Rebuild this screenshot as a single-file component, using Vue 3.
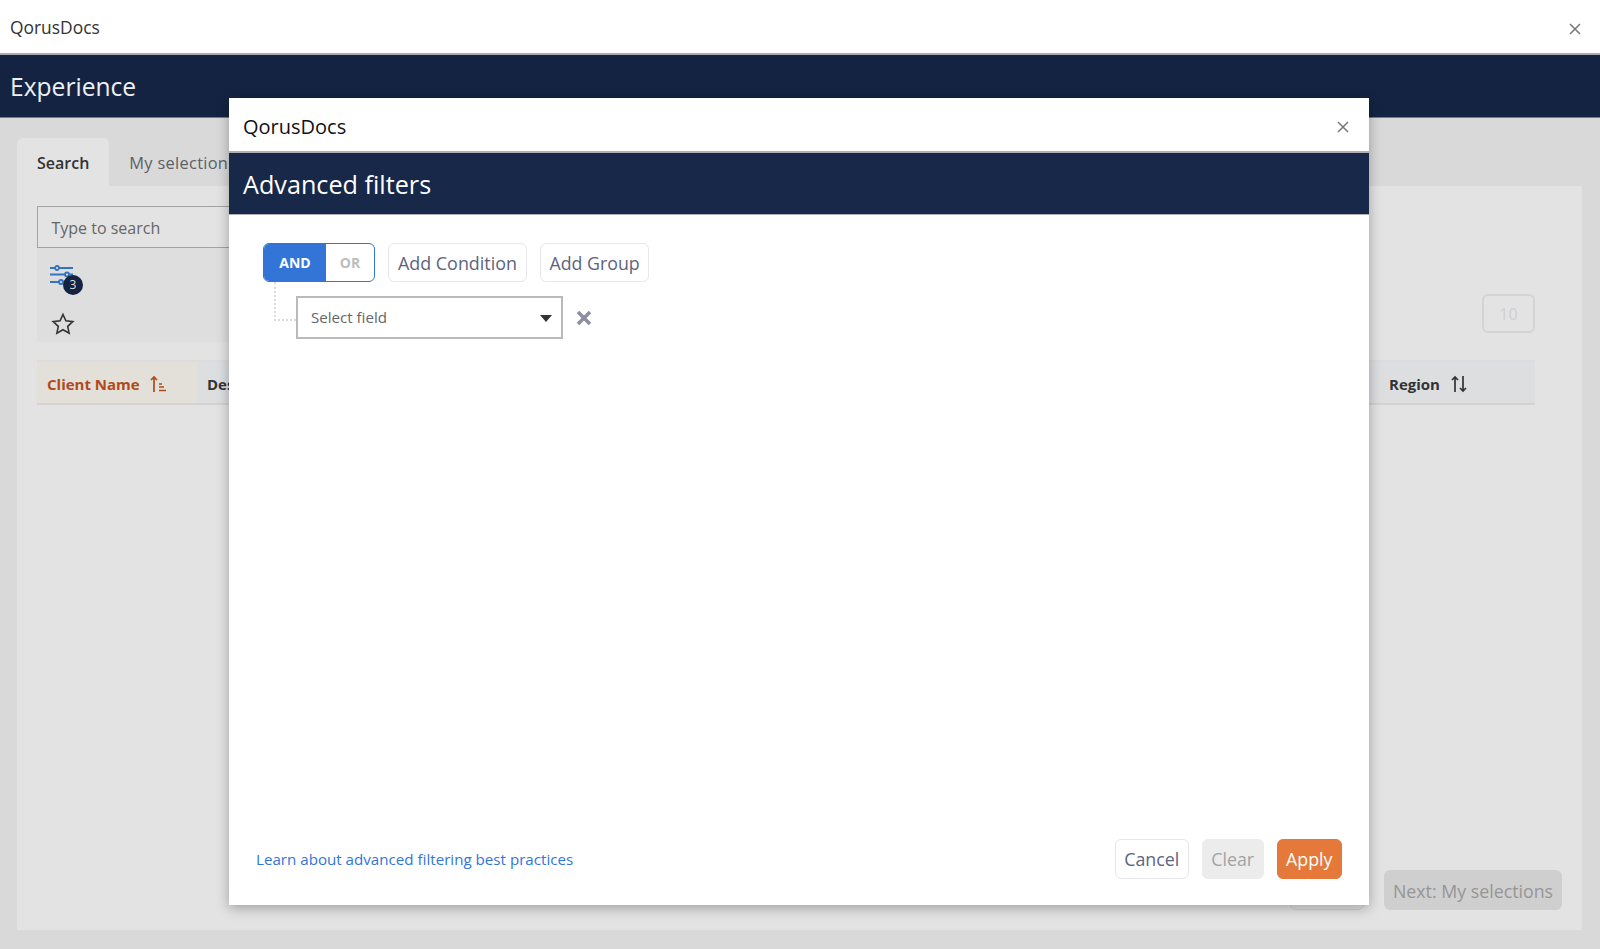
<script setup>
const columns = [
  { name: 'Client Name', sorted: true },
  { name: 'Description', sorted: false },
]
</script>

<template>
  <div class="page">
    <header class="titlebar">
      <span class="brand">QorusDocs</span>
      <svg class="close outer" viewBox="0 0 12 12"><path d="M1 1l10 10M11 1L1 11" /></svg>
    </header>
    <div class="hero">Experience</div>
    <main class="content">
      <nav class="tabs">
        <div class="tab active">Search</div>
        <div class="tab">My selections</div>
      </nav>
      <section class="panel">
        <div class="search">Type to search</div>
        <div class="toolbar">
          <div class="filter-icon">
            <svg viewBox="0 0 24 24" width="24" height="24">
              <path d="M0 5h23M0 11.500h23M0 19h12" />
              <circle cx="7" cy="5" r="2" />
              <circle cx="17" cy="11.500" r="2" />
              <circle cx="11" cy="19" r="2" />
            </svg>
            <span class="badge">3</span>
          </div>
          <svg class="star" viewBox="0 0 24 24" width="24" height="24">
            <path d="M12 2.500l2.900 6.300 6.900.8-5.100 4.700 1.400 6.800-6.100-3.400-6.100 3.400 1.400-6.800-5.100-4.700 6.900-.8z" />
          </svg>
        </div>
        <div class="page-size">10</div>
        <div class="thead">
          <div v-for="c in columns" :key="c.name" class="th" :class="{ sorted: c.sorted }">
            <span>{{ c.name }}</span>
            <svg v-if="c.sorted" viewBox="0 0 18 18" width="18" height="18">
              <path d="M5 17V2M2 5l3-3 3 3M10 9h3M10 12h5M10 15.500h7" />
            </svg>
          </div>
          <div class="th region">
            <span>Region</span>
            <svg viewBox="0 0 18 18" width="18" height="18">
              <path d="M5 17V2M2 5l3-3 3 3M13 1v15M10 13l3 3 3-3" />
            </svg>
          </div>
        </div>
        <div class="pager">
          <div class="ghost"></div>
          <div class="next">Next: My selections</div>
        </div>
      </section>
    </main>

    <div class="dialog">
      <div class="dlg-title">
        <span>QorusDocs</span>
        <svg class="close" viewBox="0 0 12 12"><path d="M1 1l10 10M11 1L1 11" /></svg>
      </div>
      <div class="dlg-head">Advanced filters</div>
      <div class="dlg-body">
        <div class="builder-top">
          <div class="toggle">
            <span class="and">AND</span>
            <span class="or">OR</span>
          </div>
          <button class="btn">Add Condition</button>
          <button class="btn group">Add Group</button>
        </div>
        <div class="rule">
          <div class="connector"></div>
          <div class="select">
            <span>Select field</span>
            <i class="caret"></i>
          </div>
          <svg class="remove" viewBox="0 0 16 16" width="16" height="16"><path d="M2 2l12 12M14 2L2 14" /></svg>
        </div>
      </div>
      <div class="dlg-foot">
        <a class="learn">Learn about advanced filtering best practices</a>
        <div class="actions">
          <button class="btn">Cancel</button>
          <button class="btn clear">Clear</button>
          <button class="btn apply">Apply</button>
        </div>
      </div>
    </div>
  </div>
</template>

<style>
html, body { margin: 0; background: #d9d9d9; }
</style>

<style scoped>
.page {
  position: relative;
  height: 949px;
  width: 1600px;
  overflow: hidden;
  display: flex;
  flex-direction: column;
  font-family: "Open Sans", "Noto Sans", sans-serif;
  background: #d9d9d9;
}
.titlebar {
  height: 53px;
  flex: none;
  background: #fff;
  border-bottom: 2px solid #a9abb0;
  display: flex;
  align-items: center;
  justify-content: space-between;
  padding: 0 19px 0 10px;
  color: #333;
  font-size: 17.400px;
}
.close { width: 12px; height: 12px; fill: none; stroke: #777; stroke-width: 1.500; }
.close.outer { margin-top: 4px; }
.hero {
  height: 62px;
  flex: none;
  background: #142341;
  color: #eef0f3;
  font-size: 24.600px;
  line-height: 64px;
  padding-left: 10px;
  border-bottom: 1px solid #777c86;
}
.content { flex: 1; padding: 20px 18px 19px 17px; display: flex; flex-direction: column; min-height: 0; }
.tabs { display: flex; height: 48px; flex: none; }
.tab {
  padding: 0 20px;
  line-height: 50px;
  font-size: 16.400px;
  letter-spacing: .3px;
  color: #5c5f66;
  font-weight: 500;
}
.tab.active { background: #e3e3e3; color: #333; border-radius: 6px 6px 0 0; font-weight: 600; font-size: 16px; letter-spacing: 0; }
.panel {
  flex: 1;
  background: #e3e3e3;
  padding: 20px 47px 0 20px;
  display: flex;
  flex-direction: column;
  position: relative;
}
.search {
  height: 42px;
  width: 400px;
  border: 1px solid #a3a3a3;
  box-sizing: border-box;
  padding-left: 13.500px;
  line-height: 42px;
  font-size: 16px;
  color: #666;
}
.toolbar {
  height: 94px;
  width: 900px;
  background: #dedede;
  position: relative;
  flex: none;
}
.filter-icon { position: absolute; left: 13px; top: 15px; width: 24px; height: 24px; }
.filter-icon svg { fill: none; stroke: #3373c4; stroke-width: 1.800; display: block; }
.filter-icon circle { fill: #dedede; }
.badge {
  position: absolute;
  left: 13px;
  top: 12px;
  width: 20px;
  height: 20px;
  border-radius: 50%;
  background: #142341;
  color: #ddd;
  font-size: 12px;
  line-height: 20px;
  text-align: center;
}
.star { position: absolute; left: 14px; top: 64px; fill: none; stroke: #333; stroke-width: 1.600; }
.page-size {
  position: absolute;
  right: 47px;
  top: 108px;
  width: 53px;
  height: 39px;
  box-sizing: border-box;
  border: 2px solid #d4d4d4;
  border-radius: 6px;
  color: #cfcfcf;
  font-size: 16px;
  line-height: 36px;
  text-align: center;
}
.thead {
  margin-top: 18px;
  height: 45px;
  flex: none;
  background: #dddee0;
  border-bottom: 2px solid #d3d3d3;
  border-top: 2px solid #dcdcdc;
  box-sizing: border-box;
  display: flex;
  position: relative;
}
.th {
  display: flex;
  align-items: center;
  gap: 9px;
  padding: 2px 10px 0;
  font-size: 15px;
  font-weight: 700;
  color: #333;
}
.th svg { fill: none; stroke: currentColor; stroke-width: 1.700; }
.th.sorted { background: #e3dfd9; color: #b04a19; width: 160px; box-sizing: border-box; }
.th.region { position: absolute; left: 1342px; top: 0; bottom: 0; gap: 10px; }
.pager {
  margin-top: auto;
  margin-bottom: 20px;
  margin-right: -27px;
  display: flex;
  justify-content: flex-end;
  align-items: flex-end;
  gap: 20px;
}
.ghost { width: 74px; height: 40px; border: 1px solid #cfcfcf; border-radius: 6px; box-sizing: border-box; }
.next {
  width: 178px;
  height: 40px;
  background: #cfcfcf;
  border-radius: 6px;
  color: #969696;
  font-size: 17.800px;
  line-height: 42px;
  text-align: center;
}

.dialog {
  position: absolute;
  left: 229px;
  top: 98px;
  width: 1140px;
  height: 807px;
  background: #fff;
  box-shadow: 0 3px 12px rgba(0, 0, 0, .3);
  display: flex;
  flex-direction: column;
}
.dlg-title {
  height: 55px;
  flex: none;
  box-sizing: border-box;
  border-bottom: 2px solid #aeb0b5;
  display: flex;
  align-items: center;
  justify-content: space-between;
  padding: 4px 20px 0 14px;
  font-size: 20px;
  color: #111;
}
.dlg-head {
  height: 62px;
  flex: none;
  box-sizing: border-box;
  background: #182848;
  color: #fff;
  font-size: 25.200px;
  line-height: 63px;
  padding-left: 14px;
  border-bottom: 1px solid #aeb0b5;
}
.dlg-body { flex: 1; padding: 28px 0 0 34px; }
.builder-top { display: flex; gap: 13px; align-items: center; }
.toggle {
  display: flex;
  width: 112px;
  height: 39px;
  box-sizing: border-box;
  border: 1px solid #3375d6;
  border-radius: 6px;
  overflow: hidden;
  font-size: 14px;
  font-weight: 700;
  line-height: 37px;
  text-align: center;
}
.and { width: 62px; background: #3375d6; color: #fff; }
.or { flex: 1; color: #bdbdbd; }
.btn {
  height: 39px;
  box-sizing: border-box;
  padding: 0 9px;
  border: 1px solid #e8e8ec;
  border-radius: 6px;
  background: #fff;
  color: #5d6380;
  font: 17.900px "Open Sans", "Noto Sans", sans-serif;
}
.btn.group { padding: 0 8.500px; font-size: 17.800px; }
.rule { display: flex; align-items: center; margin: 14px 0 0 33px; position: relative; }
.connector {
  position: absolute;
  left: -22px;
  top: -14px;
  width: 22px;
  height: 39px;
  box-sizing: border-box;
  border-left: 2px dotted #dcdcdc;
  border-bottom: 2px dotted #dcdcdc;
}
.select {
  width: 267px;
  height: 43px;
  box-sizing: border-box;
  border: 2px solid #bababa;
  padding: 0 9px 2px 13px;
  display: flex;
  align-items: center;
  justify-content: space-between;
  font-size: 15.100px;
  color: #666;
}
.caret {
  width: 0;
  height: 0;
  margin-top: 3px;
  border-left: 6.500px solid transparent;
  border-right: 6.500px solid transparent;
  border-top: 7px solid #333;
}
.remove { margin: 1px 0 0 13px; fill: none; stroke: #8c8ea3; stroke-width: 3.500; }
.dlg-foot {
  flex: none;
  display: flex;
  align-items: center;
  justify-content: space-between;
  padding: 0 27px 25px 27px;
  height: 68px;
  box-sizing: border-box;
}
.learn { color: #3375d6; font-size: 15.150px; }
.actions { display: flex; gap: 13px; }
.actions .btn { height: 40px; padding: 0 8.500px; font-size: 17.800px; }
.clear { background: #ececec; border-color: #ececec; color: #a3a3a3; }
.apply { background: #e4793a; border-color: #e4793a; color: #fff; }
</style>
